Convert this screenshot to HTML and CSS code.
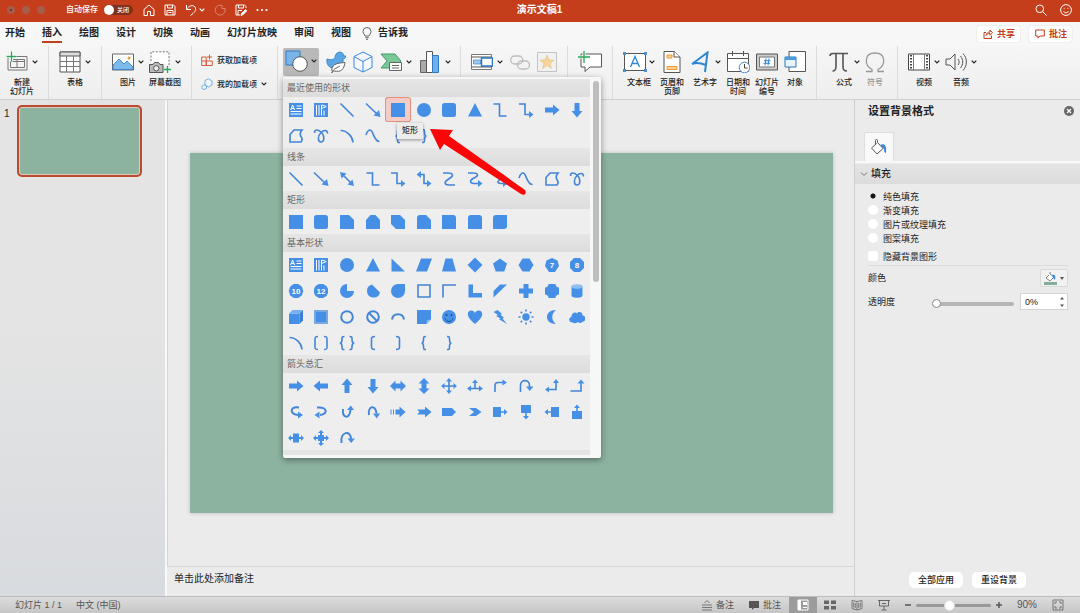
FILE: index.html
```html
<!DOCTYPE html>
<html lang="zh-CN">
<head>
<meta charset="utf-8">
<title>演示文稿1</title>
<link rel="stylesheet" href="styles.css">
</head>
<body>
<svg class="defs" aria-hidden="true">
  <symbol id="chev" viewBox="0 0 6 6"><path d="M.7 1.700L3 4l2.300-2.300" fill="none" stroke="currentColor" stroke-width="1.200"/></symbol>
  <symbol id="textbox" viewBox="0 0 16 16"><path d="M1 1h14v14H1z"/><g fill="none" stroke="#fff" stroke-width="1"><path d="M2.600 8l2-5 2 5M3.300 6.400h2.600M8.500 4h5M8.500 6.500h5M2.500 9.500h11M2.500 12h11"/></g></symbol>
  <symbol id="vtextbox" viewBox="0 0 16 16"><path d="M1 1h14v14H1z"/><g fill="none" stroke="#fff" stroke-width="1"><path d="M3.500 3v10.500M6 3v10.500M8.500 3v10.500M11 8.500v5M8.700 3l4.500 1.500-4.500 2"/></g></symbol>
  <symbol id="elbow" viewBox="0 0 16 16"><path d="M1.500 2h6v12h7" fill="none" stroke="currentColor" stroke-width="1.600"/></symbol>
  <symbol id="elbow-arrow" viewBox="0 0 16 16"><path d="M1 2h6v10.500h5" fill="none" stroke="currentColor" stroke-width="1.600"/><path d="M11 9l4.500 3.500L11 16z"/></symbol>
  <symbol id="line" viewBox="0 0 16 16"><path d="M1.500 1.500l13 13" fill="none" stroke="currentColor" stroke-width="1.600"/></symbol>
  <symbol id="line-arrow" viewBox="0 0 16 16"><path d="M1 1.500L12 12" fill="none" stroke="currentColor" stroke-width="1.600"/><path d="M15.500 15l-7-1.500 5.500-5.500z"/></symbol>
  <symbol id="freeform" viewBox="0 0 16 16"><path d="M2 14V6.500L6 2h8c-2.500 3-2 5.500-.5 7.500 1 1.600.6 3.300-.5 4.500z" fill="none" stroke="currentColor" stroke-width="1.600"/></symbol>
  <symbol id="scribble" viewBox="0 0 16 16"><path d="M1.500 5C1.500 1 5 1.500 8 4c4 3.500 3.500 10 0 10S4.500 8 8 4.500C10.500 2 14.500 1.500 14.500 5.500" fill="none" stroke="currentColor" stroke-width="1.600"/></symbol>
  <symbol id="arc" viewBox="0 0 16 16"><path d="M1.500 2.500C8 2.500 13.500 8 14 14.500" fill="none" stroke="currentColor" stroke-width="1.600"/></symbol>
  <symbol id="curve" viewBox="0 0 16 16"><path d="M1 7c1-3 2-5 4-5 3.500 0 3.500 11.500 9.500 11.500" fill="none" stroke="currentColor" stroke-width="1.600"/></symbol>
  <symbol id="square" viewBox="0 0 16 16"><path d="M1 1h14v14H1z"/></symbol>
  <symbol id="rounded" viewBox="0 0 16 16"><rect x="1" y="1" width="14" height="14" rx="2.500"/></symbol>
  <symbol id="circle" viewBox="0 0 16 16"><circle cx="8" cy="8" r="7"/></symbol>
  <symbol id="triangle" viewBox="0 0 16 16"><path d="M8 1l7 13.500H1z"/></symbol>
  <symbol id="right" viewBox="0 0 16 16"><path d="M1 5.500h8V2.500L15.500 8 9 13.500v-3H1z"/></symbol>
  <symbol id="lbrace" viewBox="0 0 16 16"><path d="M10 1.500c-2.500 0-2.500.5-2.500 3S7 8 5.500 8C7 8 7.500 9 7.500 11.500s0 3 2.500 3" fill="none" stroke="currentColor" stroke-width="1.600"/></symbol>
  <symbol id="rbrace" viewBox="0 0 16 16"><path d="M6 1.500c2.500 0 2.500.5 2.500 3S9 8 10.500 8C9 8 8.500 9 8.500 11.500s0 3-2.500 3" fill="none" stroke="currentColor" stroke-width="1.600"/></symbol>
</svg>

<header class="titlebar">
  <div class="lights"><i class="edited"></i><i></i><i></i></div>
  <label class="autosave">自动保存 <input type="checkbox" class="sr"><span class="toggle"><b></b>关闭</span></label>
  <nav class="quick">
    <button aria-label="主页"><svg viewBox="0 0 12 12"><path d="M1 5.500L6 1l5 4.500V11.500H7.500V7.500h-3v4H1z"/></svg></button>
    <button aria-label="保存"><svg viewBox="0 0 12 12"><path d="M1 1h8.500L11 2.500V11H1zM3.500 1v3h5V1M3 11V6.500h6V11M4.500 8.500h3"/></svg></button>
    <button aria-label="撤消" class="undo"><svg viewBox="0 0 12 12"><path d="M1.500 1v4.500H6M1.500 5.500C4 1.500 8 .5 10 3c2 3-1 6-4.500 8.500"/></svg><svg class="chev"><use href="#chev"/></svg></button>
    <button aria-label="恢复" class="dim"><svg viewBox="0 0 12 12"><path d="M8 1.500A5 5 0 1 0 11 5M8 1v3.500h3.500"/></svg></button>
    <button aria-label="另存为"><svg viewBox="0 0 12 12"><path d="M5 11H1V1h8.500L11 2.500V4M3.500 1v3h5V1M3 11V6.500h4"/><path d="M6 11.500l.5-2 4-4 1.300 1.300-4 4z" fill="#fff"/></svg></button>
    <button aria-label="更多"><svg viewBox="0 0 12 12" class="solid"><circle cx="1.500" cy="6" r="1.100"/><circle cx="6" cy="6" r="1.100"/><circle cx="10.500" cy="6" r="1.100"/></svg></button>
  </nav>
  <h1>演示文稿1</h1>
  <nav class="quick right-tools">
    <button aria-label="搜索"><svg viewBox="0 0 12 12"><circle cx="4.800" cy="4.800" r="3.800"/><path d="M7.600 7.600l4 4"/></svg></button>
    <button aria-label="反馈"><svg viewBox="0 0 12 12"><circle cx="6" cy="6" r="5.400"/><path d="M3.500 7.200c1 2 4 2 5 0M4.200 3.800v1M7.800 3.800v1"/></svg></button>
  </nav>
</header>

<nav class="tabs">
  <button>开始</button><button class="active">插入</button><button>绘图</button><button>设计</button><button>切换</button><button>动画</button><button>幻灯片放映</button><button>审阅</button><button>视图</button>
  <button class="tell"><svg viewBox="0 0 10 13"><path d="M3 9C3 7.500 1 6.800 1 4.500a4 4 0 0 1 8 0C9 6.800 7 7.500 7 9zM3.300 10.700h3.400M4 12.300h2" fill="none" stroke="#666"/></svg>告诉我</button>
  <span class="actions">
    <button><svg viewBox="0 0 10 10"><path d="M3 3.500H1v6h7.500V6.500M3 6.500C3.500 4 5 3 7 3V1l2.500 2.700L7 6.200V4.500C5 4.500 4 5 3 6.500z"/></svg>共享</button>
    <button><svg viewBox="0 0 10 10"><path d="M.7 1h8.600v6H5L3 9.200V7H.7z"/></svg>批注</button>
  </span>
</nav>

<section class="ribbon">
  <div class="group first">
    <button class="tool"><span><svg viewBox="0 0 22 22"><path d="M2 5.500h19V19H2zM4.500 8.500h14v8h-14zM11 8.500v8M4.500 10.500h14" fill="#f4f4f4" stroke="#777"/><path d="M5.500.5v10M.5 5.500h10" stroke="#fff" stroke-width="3"/><path d="M5.500.5v10M.5 5.500h10" stroke="#2aa85a" stroke-width="1.300"/></svg><svg class="chev"><use href="#chev"/></svg></span>新建<br>幻灯片</button>
  </div>
  <div class="group">
    <button class="tool"><span><svg viewBox="0 0 22 22"><path d="M1 1h20v20H1z" fill="#fff" stroke="#555"/><path d="M1 1h20v4H1z" fill="#ddd" stroke="#555"/><path d="M1 10.500h20M1 15.500h20M7.500 5v16M14.500 5v16" stroke="#777"/></svg><svg class="chev"><use href="#chev"/></svg></span>表格</button>
  </div>
  <div class="group">
    <button class="tool"><span><svg viewBox="0 0 22 22"><path d="M.5 3h21v16H.5z" fill="#fff" stroke="#666"/><path d="M1 14l6-6 5 5 3-3 6 6v2.500H1z" fill="#7db9ea" stroke="#2b7cc7" stroke-width=".8"/><circle cx="17" cy="7" r="1.500" fill="#ee9b3a"/></svg><svg class="chev"><use href="#chev"/></svg></span>图片</button>
    <button class="tool"><span><svg viewBox="0 0 22 22"><path d="M2 10V.8h18V14" fill="#fff" stroke="#777" stroke-dasharray="2 1.500"/><path d="M.5 13.500H4l1.500-2h4l1.500 2h3v8H.5z" fill="#bbb" stroke="#555"/><circle cx="7.300" cy="17.300" r="2.700" fill="#eee" stroke="#555"/><path d="M18.500 15v7M15 18.500h7" stroke="#2aa85a" stroke-width="1.300"/></svg><svg class="chev"><use href="#chev"/></svg></span>屏幕截图</button>
  </div>
  <div class="group addins">
    <button><svg viewBox="0 0 12 12"><path d="M.7 3h4.500v8.500H.7zM5.200 7h6.100v4.500H5.200zM.7 7h4.500M8.500.5v5M6 3h5.300" fill="none" stroke="#d8593b"/></svg>获取加载项</button>
    <button><svg viewBox="0 0 12 12"><path d="M4 2.500L7.500.8 11 3v4L7.500 9 4 7z" fill="#eef6fd" stroke="#5c9fd6" stroke-width=".8"/><path d="M1 8l2-1.300L5.500 8v2.500L3 11.500l-2-1z" fill="#eef6fd" stroke="#5c9fd6" stroke-width=".8"/></svg>我的加载项<svg class="chev"><use href="#chev"/></svg></button>
  </div>
  <div class="group illus">
    <div class="shapes-menu">
      <button class="tool pressed" aria-label="形状"><span><svg class="wide" viewBox="0 0 24 22"><path d="M1 1h14v14H1z" fill="#7ab5ea" stroke="#2f7cc4"/><circle cx="15" cy="14" r="7.300" fill="#fff" stroke="#555"/></svg><svg class="chev"><use href="#chev"/></svg></span></button>
      <div class="gallery">
        <div class="scroll">
          <h2>最近使用的形状</h2>
          <div class="grid">
            <button aria-label="文本框"><svg><use href="#textbox"/></svg></button>
            <button aria-label="竖排文本框"><svg><use href="#vtextbox"/></svg></button>
            <button aria-label="直线"><svg><use href="#line"/></svg></button>
            <button aria-label="箭头"><svg><use href="#line-arrow"/></svg></button>
            <button aria-label="矩形" class="picked"><svg><use href="#square"/></svg></button>
            <button aria-label="椭圆"><svg><use href="#circle"/></svg></button>
            <button aria-label="圆角矩形"><svg><use href="#rounded"/></svg></button>
            <button aria-label="三角形"><svg><use href="#triangle"/></svg></button>
            <button aria-label="肘形连接符"><svg><use href="#elbow"/></svg></button>
            <button aria-label="肘形箭头"><svg><use href="#elbow-arrow"/></svg></button>
            <button aria-label="右箭头"><svg><use href="#right"/></svg></button>
            <button aria-label="下箭头"><svg viewBox="0 0 16 16"><path d="M5.500 1v8H2.500L8 15.500 13.500 9h-3V1z"/></svg></button>
            <button aria-label="任意多边形"><svg><use href="#freeform"/></svg></button>
            <button aria-label="自由曲线"><svg><use href="#scribble"/></svg></button>
            <button aria-label="弧形"><svg><use href="#arc"/></svg></button>
            <button aria-label="曲线"><svg><use href="#curve"/></svg></button>
            <button aria-label="左大括号"><svg><use href="#lbrace"/></svg></button>
            <button aria-label="右大括号"><svg><use href="#rbrace"/></svg></button>
          </div>
          <h2>线条</h2>
          <div class="grid">
            <button aria-label="直线"><svg><use href="#line"/></svg></button>
            <button aria-label="箭头"><svg><use href="#line-arrow"/></svg></button>
            <button aria-label="双箭头"><svg viewBox="0 0 16 16"><path class="l" d="M4 4l8 8"/><path d="M15 15l-6.500-1.500 5-5zM1 1l6.500 1.500-5 5z"/></svg></button>
            <button aria-label="肘形"><svg><use href="#elbow"/></svg></button>
            <button aria-label="肘形箭头"><svg><use href="#elbow-arrow"/></svg></button>
            <button aria-label="肘形双箭头"><svg viewBox="0 0 16 16"><path class="l" d="M4 3.500h4v9h4"/><path d="M11 9l4.500 3.500L11 16zM5 0L.5 3.500 5 7z"/></svg></button>
            <button aria-label="曲线连接符"><svg viewBox="0 0 16 16"><path class="l" d="M2 2h5c5 0 6 3 2 5L7 8.500C3 11 3 14 8 14h6"/></svg></button>
            <button aria-label="曲线箭头"><svg viewBox="0 0 16 16"><path class="l" d="M1 2h5c5 0 6 2.500 2 4.500l-2 1C2 10 3 12.500 8 12.500h4"/><path d="M11 9l4.500 3.500L11 16z"/></svg></button>
            <button aria-label="曲线双箭头"><svg viewBox="0 0 16 16"><path class="l" d="M4 3.500h4c4 0 4 2 1 4C6 9 4 12.500 9 12.500h2"/><path d="M11 9l4.500 3.500L11 16zM5 0L.5 3.500 5 7z"/></svg></button>
            <button aria-label="曲线"><svg><use href="#curve"/></svg></button>
            <button aria-label="任意多边形"><svg><use href="#freeform"/></svg></button>
            <button aria-label="自由曲线"><svg><use href="#scribble"/></svg></button>
          </div>
          <h2>矩形</h2>
          <div class="grid">
            <button aria-label="矩形"><svg><use href="#square"/></svg></button>
            <button aria-label="圆角矩形"><svg><use href="#rounded"/></svg></button>
            <button aria-label="剪去单角"><svg viewBox="0 0 16 16"><path d="M1 1h9l5 5v9H1z"/></svg></button>
            <button aria-label="剪去同侧角"><svg viewBox="0 0 16 16"><path d="M5.500 1h5L15 6v9H1V6z"/></svg></button>
            <button aria-label="剪去对角"><svg viewBox="0 0 16 16"><path d="M1 1h9l5 5v9H6l-5-5z"/></svg></button>
            <button aria-label="圆角剪角"><svg viewBox="0 0 16 16"><path d="M4 1h6l5 5v9H1V4a3 3 0 0 1 3-3z"/></svg></button>
            <button aria-label="单圆角"><svg viewBox="0 0 16 16"><path d="M1 1h11a3 3 0 0 1 3 3v11H1z"/></svg></button>
            <button aria-label="同侧圆角"><svg viewBox="0 0 16 16"><path d="M4 1h8a3 3 0 0 1 3 3v11H1V4a3 3 0 0 1 3-3z"/></svg></button>
            <button aria-label="对角圆角"><svg viewBox="0 0 16 16"><path d="M4 1h11v11a3 3 0 0 1-3 3H1V4a3 3 0 0 1 3-3z"/></svg></button>
          </div>
          <h2>基本形状</h2>
          <div class="grid">
            <button aria-label="文本框"><svg><use href="#textbox"/></svg></button>
            <button aria-label="竖排文本框"><svg><use href="#vtextbox"/></svg></button>
            <button aria-label="椭圆"><svg><use href="#circle"/></svg></button>
            <button aria-label="三角形"><svg><use href="#triangle"/></svg></button>
            <button aria-label="直角三角形"><svg viewBox="0 0 16 16"><path d="M1.500 1.500L15 14.500H1.500z"/></svg></button>
            <button aria-label="平行四边形"><svg viewBox="0 0 16 16"><path d="M5 1.500h11l-5 13H0z"/></svg></button>
            <button aria-label="梯形"><svg viewBox="0 0 16 16"><path d="M4.500 1.500h7l3.500 13H1z"/></svg></button>
            <button aria-label="菱形"><svg viewBox="0 0 16 16"><path d="M8 .5L15.500 8 8 15.500.5 8z"/></svg></button>
            <button aria-label="五边形"><svg viewBox="0 0 16 16"><path d="M8 1.500l7 5-2.700 8H3.700L1 6.500z"/></svg></button>
            <button aria-label="六边形"><svg viewBox="0 0 16 16"><path d="M4.500 1.500h7L15.500 8l-4 6.500h-7L.5 8z"/></svg></button>
            <button aria-label="七边形"><svg viewBox="0 0 16 16"><path d="M8 1l5.500 2.500L15 9l-4 6H5L1 9l1.500-5.500z"/><text x="8" y="11">7</text></svg></button>
            <button aria-label="八边形"><svg viewBox="0 0 16 16"><path d="M5 1h6l4 4v6l-4 4H5l-4-4V5z"/><text x="8" y="11">8</text></svg></button>
            <button aria-label="十边形"><svg viewBox="0 0 16 16"><path d="M5.800 1h4.400l3.600 2.500L15.300 8l-1.500 4.500-3.600 2.500H5.800l-3.600-2.500L.7 8l1.500-4.500z"/><text x="8" y="11">10</text></svg></button>
            <button aria-label="十二边形"><svg viewBox="0 0 16 16"><path d="M6 1h4l3.500 2L15 6v4l-1.500 3-3.500 2H6l-3.500-2L1 10V6l1.500-3z"/><text x="8" y="11">12</text></svg></button>
            <button aria-label="饼形"><svg viewBox="0 0 16 16"><path d="M8 1a7 7 0 1 0 7 7H8z"/></svg></button>
            <button aria-label="弦形"><svg viewBox="0 0 16 16"><path d="M7 1.500A6.600 6.600 0 1 0 15 9.500z"/></svg></button>
            <button aria-label="泪滴形"><svg viewBox="0 0 16 16"><path d="M8 1h7v7a7 7 0 1 1-7-7z"/></svg></button>
            <button aria-label="图文框"><svg viewBox="0 0 16 16"><path class="l" d="M2 2h12v12H2z"/></svg></button>
            <button aria-label="半闭框"><svg viewBox="0 0 16 16"><path class="l" d="M2 14.500V2h13"/></svg></button>
            <button aria-label="L形"><svg viewBox="0 0 16 16"><path d="M1.500 1.500H6V10h9v4.500H1.500z"/></svg></button>
            <button aria-label="斜纹"><svg viewBox="0 0 16 16"><path d="M8 1.500h7L1.500 14.500V8z"/></svg></button>
            <button aria-label="十字形"><svg viewBox="0 0 16 16"><path d="M5.500 1h5v4.500H15v5h-4.500V15h-5v-4.500H1v-5h4.500z"/></svg></button>
            <button aria-label="缺角矩形"><svg viewBox="0 0 16 16"><path d="M4.500 1h7c0 2 1.500 3.500 3.500 3.500v7c-2 0-3.500 1.500-3.500 3.500h-7c0-2-1.500-3.500-3.500-3.500v-7c2 0 3.500-1.500 3.500-3.500z"/></svg></button>
            <button aria-label="圆柱形"><svg viewBox="0 0 16 16"><path d="M2.500 3.500v9c0 3 11 3 11 0v-9z"/><ellipse cx="8" cy="3.500" rx="5.500" ry="2.300" fill="#8fbdf0"/></svg></button>
            <button aria-label="立方体"><svg viewBox="0 0 16 16"><path d="M1 4.500h10.500V15H1z"/><path d="M1 4.500L4.500 1H15l-3.500 3.500z" fill="#77b0ee"/><path d="M15 1v10.500L11.500 15V4.500z" fill="#3a7fd0"/></svg></button>
            <button aria-label="棱台"><svg viewBox="0 0 16 16"><path d="M1 1h14v14H1z" fill="#77a8e2"/><path d="M3 3h10v10H3z"/></svg></button>
            <button aria-label="圆环"><svg viewBox="0 0 16 16"><circle cx="8" cy="8" r="5.800" class="l thick"/></svg></button>
            <button aria-label="禁止符"><svg viewBox="0 0 16 16"><circle cx="8" cy="8" r="5.800" class="l thick"/><path class="l thick" d="M4 4l8 8"/></svg></button>
            <button aria-label="空心弧"><svg viewBox="0 0 16 16"><path class="l thick" d="M2 10.500c1-7 11-7 12 0"/></svg></button>
            <button aria-label="折角形"><svg viewBox="0 0 16 16"><path d="M1 1h14v9.500L10.500 15H1z"/><path d="M15 10.500L10.500 15l.5-4z" fill="#8fbdf0"/></svg></button>
            <button aria-label="笑脸"><svg viewBox="0 0 16 16"><circle cx="8" cy="8" r="7"/><circle cx="5.500" cy="6" r="1" fill="#1c4f92"/><circle cx="10.500" cy="6" r="1" fill="#1c4f92"/><path d="M4 9.500c1.500 4 6.500 4 8 0" fill="none" stroke="#1c4f92"/></svg></button>
            <button aria-label="心形"><svg viewBox="0 0 16 16"><path d="M8 15C3 10.500.8 8 .8 5 .8 1 6 .3 8 4c2-3.700 7.200-3 7.200 1 0 3-2.200 5.500-7.200 10z"/></svg></button>
            <button aria-label="闪电形"><svg viewBox="0 0 16 16"><path d="M5.500 1l4.500 4-1.500.7 3.500 3-1.500.7L15 15l-8-4.700 1.500-.8L4 7l2-1-4.500-3z"/></svg></button>
            <button aria-label="太阳形"><svg viewBox="0 0 16 16"><circle cx="8" cy="8" r="3.700"/><path class="l" d="M8 .5v2M8 13.500v2M.5 8h2M13.500 8h2M2.700 2.700l1.400 1.400M11.900 11.900l1.400 1.400M13.300 2.700l-1.400 1.400M4.100 11.900l-1.400 1.400"/></svg></button>
            <button aria-label="新月形"><svg viewBox="0 0 16 16"><path d="M12 1C6 1 3 4 3 8s3 7 9 7c-5-3.500-5-10.500 0-14z"/></svg></button>
            <button aria-label="云形"><svg viewBox="0 0 16 16"><path d="M3.500 13.500C-.5 13.500-1 8.500 2.500 8 2 4 6.500 2.500 8 4.500c2-3 6-1 5.500 2 4 0 3.500 6 .5 6-2 2-4 1.500-5 .5-2 1.500-4 1.500-5.500.5z"/></svg></button>
            <button aria-label="弧形"><svg><use href="#arc"/></svg></button>
            <button aria-label="双括号"><svg viewBox="0 0 16 16"><path class="l" d="M5 1.500C2.500 1.500 2 2 2 4v8c0 2 .5 2.500 3 2.500M11 1.500c2.500 0 3 .5 3 2.500v8c0 2-.5 2.500-3 2.500"/></svg></button>
            <button aria-label="双大括号"><svg viewBox="0 0 16 16"><path class="l" d="M5.500 1.500C3 1.500 3 2 3 4.500S2.500 8 .7 8C2.500 8 3 9 3 11.500s0 3 2.500 3M10.500 1.500c2.500 0 2.500.5 2.500 3S13.500 8 15.300 8C13.500 8 13 9 13 11.500s0 3-2.500 3"/></svg></button>
            <button aria-label="左中括号"><svg viewBox="0 0 16 16"><path class="l" d="M10 1.500C7 1.500 6.500 2 6.500 4v8c0 2 .5 2.500 3.500 2.500"/></svg></button>
            <button aria-label="右中括号"><svg viewBox="0 0 16 16"><path class="l" d="M6 1.500c3 0 3.500.5 3.500 2.500v8c0 2-.5 2.500-3.500 2.500"/></svg></button>
            <button aria-label="左大括号"><svg><use href="#lbrace"/></svg></button>
            <button aria-label="右大括号"><svg><use href="#rbrace"/></svg></button>
          </div>
          <h2>箭头总汇</h2>
          <div class="grid">
            <button aria-label="右箭头"><svg><use href="#right"/></svg></button>
            <button aria-label="左箭头"><svg viewBox="0 0 16 16"><path d="M15 5.500H7v-3L.5 8 7 13.500v-3h8z"/></svg></button>
            <button aria-label="上箭头"><svg viewBox="0 0 16 16"><path d="M5.500 15V7H2.500L8 .5 13.500 7h-3v8z"/></svg></button>
            <button aria-label="下箭头"><svg viewBox="0 0 16 16"><path d="M5.500 1v8H2.500L8 15.500 13.500 9h-3V1z"/></svg></button>
            <button aria-label="左右箭头"><svg viewBox="0 0 16 16"><path d="M0 8l5.500-5.500v3h5v-3L16 8l-5.500 5.500v-3h-5v3z"/></svg></button>
            <button aria-label="上下箭头"><svg viewBox="0 0 16 16"><path d="M8 0l5.500 5.500h-3v5h3L8 16l-5.500-5.500h3v-5h-3z"/></svg></button>
            <button aria-label="十字箭头"><svg viewBox="0 0 16 16"><path class="l" d="M8 3v10M3 8h10"/><path d="M8 0l3 3.500H5zM8 16l3-3.500H5zM0 8l3.500-3v6zM16 8l-3.500-3v6z"/></svg></button>
            <button aria-label="丁字箭头"><svg viewBox="0 0 16 16"><path class="l" d="M8 4v6.500M3 10.500h10"/><path d="M8 1.500L11 5H5zM0 10.500l4-3v6zM16 10.500l-4-3v6z"/></svg></button>
            <button aria-label="圆角右箭头"><svg viewBox="0 0 16 16"><path class="l" d="M3 14V7.500C3 5.500 4 4.500 6 4.500h5"/><path d="M10.500 1.500l4.500 3-4.500 3z"/></svg></button>
            <button aria-label="手杖形箭头"><svg viewBox="0 0 16 16"><path class="l" d="M2.500 14V7.500c0-6.500 9-6.500 9 0v2"/><path d="M8 8.500h7.500L11.700 13z"/></svg></button>
            <button aria-label="直角双向箭头"><svg viewBox="0 0 16 16"><path class="l" d="M5 11.500h7V5"/><path d="M12 1l3 4H9zM1 11.500l4-3v6z"/></svg></button>
            <button aria-label="直角上箭头"><svg viewBox="0 0 16 16"><path class="l" d="M1.500 13h10.500V5"/><path d="M12 1.500l3.500 4h-7z"/></svg></button>
            <button aria-label="左弧形箭头"><svg viewBox="0 0 16 16"><path class="l thick" d="M11 3.500C2 2.500 1 9.500 10 11"/><path d="M10 7.500l5 3.500-5 3.500z"/></svg></button>
            <button aria-label="右弧形箭头"><svg viewBox="0 0 16 16"><path class="l thick" d="M4 3.500c10-1 12 6.500 3 7.500"/><path d="M6.500 7.500L1.500 11l5 3.500z"/></svg></button>
            <button aria-label="上弧形箭头"><svg viewBox="0 0 16 16"><path class="l thick" d="M4 5c-1 9 6.500 11 7.500 1"/><path d="M8 6l3.800-4.500L15 6z"/></svg></button>
            <button aria-label="下弧形箭头"><svg viewBox="0 0 16 16"><path class="l thick" d="M4 11C2.500 2 10.500 0 11.500 9.500"/><path d="M8 9.500l3.800 5L15 9.500z"/></svg></button>
            <button aria-label="虚尾箭头"><svg viewBox="0 0 16 16"><path d="M5.500 5.500H9.500V2.500L15.500 8l-6 5.500v-3h-4zM.5 5.500h1v5h-1zM3 5.500h1v5H3z"/></svg></button>
            <button aria-label="燕尾形箭头"><svg viewBox="0 0 16 16"><path d="M1 5.500h8v-3L15.500 8 9 13.500v-3H1L3.500 8z"/></svg></button>
            <button aria-label="五边形箭头"><svg viewBox="0 0 16 16"><path d="M1 4h10l4 4-4 4H1z"/></svg></button>
            <button aria-label="V形"><svg viewBox="0 0 16 16"><path d="M2 4h7l5.500 4L9 12H2l5-4z"/></svg></button>
            <button aria-label="右箭头标注"><svg viewBox="0 0 16 16"><path d="M1 3h8v4.200h3V5l3.500 3-3.500 3V8.800H9V13H1z"/></svg></button>
            <button aria-label="下箭头标注"><svg viewBox="0 0 16 16"><path d="M3 1h10v8H8.800v3H11l-3 3.500L5 12h2.200V9H3z"/></svg></button>
            <button aria-label="左箭头标注"><svg viewBox="0 0 16 16"><path d="M15 3H7v4.200H4V5L.5 8 4 11V8.800h3V13h8z"/></svg></button>
            <button aria-label="上箭头标注"><svg viewBox="0 0 16 16"><path d="M3 15h10V7H8.800V4H11L8 .5 5 4h2.200v3H3z"/></svg></button>
            <button aria-label="左右箭头标注"><svg viewBox="0 0 16 16"><path d="M5 3.500h6V7h2V5l3 3-3 3V9h-2v3.500H5V9H3v2L0 8l3-3v2h2z"/></svg></button>
            <button aria-label="十字箭头标注"><svg viewBox="0 0 16 16"><path d="M5 5h2V3H5l3-3 3 3H9v2h2v2h2V5l3 3-3 3V9h-2v2H9v2h2l-3 3-3-3h2v-2H5V9H3v2L0 8l3-3v2h2z"/></svg></button>
            <button aria-label="环形箭头"><svg viewBox="0 0 16 16"><path class="l thick" d="M2.500 13C1 1 12 0 12 9"/><path d="M8.500 8.500H16L12.200 13z"/></svg></button>
          </div>
          <div class="next-band"></div>
        </div>
        <div class="track"><div class="thumb"></div></div>
        <div class="tooltip" role="tooltip">矩形</div>
        <svg class="pointer" viewBox="0 0 98 68"><path d="M1 0l23 1-4 6 76 54q2 3-1 5l-3-1-77-50-4 6z" fill="#fb0606"/></svg>
      </div>
    </div>
    <button class="tool" aria-label="图标"><span><svg class="narrow" viewBox="0 0 20 22"><path d="M1 8c3 1 6 1 8-1 0-7 8-8 9-2h2c0 2-2 3-3 3 1 7-5 10-9 9.500C3 17 0 13 1 8z" fill="#5ba6e2" stroke="#2b7cc7" stroke-width=".8"/><path d="M6 20c-1-6 4-8 13-8.500-1 7-4 10-11 8.500-1 0-2 1-2 2 0-3 4-5 8-7" fill="#fff" stroke="#666"/></svg></span></button>
    <button class="tool" aria-label="3D 模型"><span><svg class="narrow" viewBox="0 0 20 22"><path d="M10 1l9 4.500v11L10 21l-9-4.500v-11zM1 5.500l9 5 9-5M10 10.500V21" fill="#f2f8fe" stroke="#3b86dc"/></svg></span></button>
    <button class="tool" aria-label="SmartArt"><span><svg viewBox="0 0 22 22"><path d="M1 3h14l6 7-6 7H1l6-7z" fill="#7cc798" stroke="#3f9c66"/><path d="M9.500 11.500h12v8h-12zM12 14.500h7M12 17h7" fill="#fff" stroke="#666"/></svg><svg class="chev"><use href="#chev"/></svg></span></button>
    <button class="tool" aria-label="图表"><span><svg viewBox="0 0 22 22"><path d="M1.500 9.500h6v12h-6z" fill="#aaa" stroke="#666"/><path d="M7.500.5h6v21h-6z" fill="#fff" stroke="#555"/><path d="M13.500 4.500h6v17h-6z" fill="#6eb1ea" stroke="#2f7cc4"/></svg><svg class="chev"><use href="#chev"/></svg></span></button>
  </div>
  <div class="group links">
    <button class="tool" aria-label="缩放定位"><span><svg viewBox="0 0 22 22"><path d="M.5 3.500h20v15H.5z" fill="#fff" stroke="#777"/><path d="M1 6h19M1 16h19" stroke="#aaa" stroke-width="2"/><path d="M2.500 9h7v4h-7z" fill="#9ccaf0" stroke="#3a84c8" stroke-width=".7"/><path d="M10.500 7h11v8h-11z" fill="#fff" stroke="#2676bd" stroke-width="1.500"/></svg><svg class="chev"><use href="#chev"/></svg></span></button>
    <button class="tool" aria-label="链接"><span><svg class="narrow faded" viewBox="0 0 20 22"><rect x=".7" y="5" width="12" height="8" rx="4" fill="none" stroke="#999" stroke-width="1.300"/><rect x="7.500" y="10" width="12" height="8" rx="4" fill="none" stroke="#999" stroke-width="1.300"/></svg></span></button>
    <button class="tool" aria-label="动作"><span><svg class="narrow" viewBox="0 0 20 22"><path d="M.5 1.500h19v19H.5z" fill="#f1f1f1" stroke="#c4c4c4"/><path d="M10 4l2 5 5 .2-4 3.200 1.500 5-4.500-3-4.500 3 1.500-5-4-3.200L8 9z" fill="#f6d59c" stroke="#e8bd78" stroke-width=".6"/></svg></span></button>
  </div>
  <div class="group">
    <button class="tool" aria-label="批注"><span><svg class="wide" viewBox="0 0 24 22"><path d="M3 3h20.500v13H12l-5 4.500V16H3z" fill="#fff" stroke="#555"/><path d="M6 0v12M0 6h12" stroke="#f3f3f3" stroke-width="3"/><path d="M6 0v12M0 6h12" stroke="#2aa85a" stroke-width="1.300"/></svg></span></button>
  </div>
  <div class="group text">
    <button class="tool"><span><svg class="wide" viewBox="0 0 24 22"><path d="M1.500 2.500h21v17h-21z" fill="#fff" stroke="#555"/><path d="M7.500 16L12 5.500l4.500 10.500M9 12.500h6" fill="none" stroke="#2f86d2" stroke-width="1.300"/><path d="M0 1h3v3H0zM21 1h3v3h-3zM0 18h3v3H0zM21 18h3v3h-3z" fill="#4a90d0"/></svg><svg class="chev"><use href="#chev"/></svg></span>文本框</button>
    <button class="tool"><span><svg class="narrow" viewBox="0 0 20 22"><path d="M2 .5h10L18 6v15.500H2z" fill="#fff" stroke="#555"/><path d="M12 .5V6h6" fill="#fff" stroke="#555"/><path d="M5 4h5v3H5zM5 15.500h10v3H5z" fill="#fbd09a" stroke="#ef9a35"/></svg></span>页眉和<br>页脚</button>
    <button class="tool"><span><svg viewBox="0 0 22 22"><path d="M3 13L18.500 1.500 16 21M3 13c4-2 9-1 14 1" fill="none" stroke="#2f86d2" stroke-width="2"/></svg><svg class="chev"><use href="#chev"/></svg></span>艺术字</button>
    <button class="tool"><span><svg class="wide" viewBox="0 0 24 22"><path d="M1.500 2.500h21v18h-21z" fill="#fff" stroke="#555"/><path d="M1.500 7.500h21M6.500 0v5M17.500 0v5" stroke="#555"/><circle cx="18.500" cy="16.500" r="5.300" fill="#fff" stroke="#3a8ad0"/><path d="M18.500 13v4h3" fill="none" stroke="#444"/></svg></span>日期和<br>时间</button>
    <button class="tool"><span><svg viewBox="0 0 22 22"><path d="M.5 3h21v16H.5z" fill="#ccc" stroke="#555"/><path d="M3.500 6h15v10h-15z" fill="#fff" stroke="#777"/><path d="M10 7.500L9 14.500M13 7.500l-1 7M8 9.700h6.500M7.500 12.300H14" stroke="#2f86d2"/></svg></span>幻灯片<br>编号</button>
    <button class="tool"><span><svg viewBox="0 0 22 22"><path d="M5 .5h16.500v20H5z" fill="#fff" stroke="#555"/><path d="M1 6h11v10H1z" fill="#e7f3fd" stroke="#2676bd"/><path d="M1 6h11v3H1z" fill="#4a9be0"/></svg></span>对象</button>
  </div>
  <div class="group formula">
    <button class="tool"><span><svg viewBox="0 0 22 22"><path d="M2 5c0-2 1-2.500 3-2.500h15M8 3v12c0 4-1 5-3.500 5M15 3v13c0 3 1 4 4 4" fill="none" stroke="#555" stroke-width="1.600"/></svg><svg class="chev"><use href="#chev"/></svg></span>公式</button>
    <button class="tool off"><span><svg class="narrow" viewBox="0 0 20 22"><path d="M1 20.500h6v-2C-1 14-1 2 10 2s11 12 3 16.500v2h6" fill="none" stroke="#999" stroke-width="1.300"/></svg></span>符号</button>
  </div>
  <div class="group last">
    <button class="tool"><span><svg viewBox="0 0 22 22"><path d="M.5 3h21v16H.5z" fill="#fff" stroke="#444"/><path d="M3 4v14M19 4v14" stroke="#444" stroke-width="2" stroke-dasharray="1.500 1.500"/><path d="M5.500 3v16M16.500 3v16" stroke="#777"/></svg><svg class="chev"><use href="#chev"/></svg></span>视频</button>
    <button class="tool"><span><svg viewBox="0 0 22 22"><path d="M1 8h4l5-5v16l-5-5H1zM13 8c1.500 2 1.500 4 0 6M15.500 5c3 4 3 8 0 12M18 2.500c4.500 5 4.500 12 0 17" fill="none" stroke="#555"/></svg><svg class="chev"><use href="#chev"/></svg></span>音频</button>
  </div>
</section>

<main class="work">
  <aside class="thumbs"><span>1</span><button class="mini" aria-label="幻灯片 1"></button></aside>
  <section class="stage">
    <div class="canvas"><div class="slide"></div></div>
    <div class="notes">单击此处添加备注</div>
  </section>
  <aside class="pane">
    <header><h2>设置背景格式</h2><button class="close" aria-label="关闭"><svg viewBox="0 0 10 10"><circle cx="5" cy="5" r="5" fill="#666"/><path d="M3 3l4 4M7 3L3 7" stroke="#fff" stroke-width="1.300"/></svg></button></header>
    <div class="pane-tabs"><button aria-label="填充"><svg viewBox="0 0 18 16"><path d="M6.500 4.500L1.500 9 7 15l6-5.500-5.500-6V1.500c0-1.500-2-1.500-2 0v4" fill="#fff" stroke="#555"/><path d="M10 6c4-2 7 0 6 8-1 0-2-1-2-4l-1-1z" fill="#3a8ad6"/></svg></button></div>
    <h3><svg viewBox="0 0 8 6"><path d="M1 1.500l3 3 3-3" fill="none" stroke="#777"/></svg>填充</h3>
    <form class="form">
      <label><input type="radio" name="fill" checked>纯色填充</label>
      <label><input type="radio" name="fill">渐变填充</label>
      <label><input type="radio" name="fill">图片或纹理填充</label>
      <label><input type="radio" name="fill">图案填充</label>
      <label class="hide"><input type="checkbox">隐藏背景图形</label>
      <div class="row color"><span>颜色</span><button type="button" class="swatch" aria-label="颜色"><svg viewBox="0 0 22 14"><path d="M6 4L3 7l4 3 4-4-4-3V1" fill="#fff" stroke="#666" stroke-width=".8"/><path d="M9 4c3-1 4 1 3 5l-2-2z" fill="#3a8ad6"/><path d="M1 11h13v3H1z" fill="#86ad9b"/><path d="M17 6h4l-2 3z" fill="#555"/></svg></button></div>
      <div class="row"><label for="alpha">透明度</label><input id="alpha" type="range" value="0"><span class="spin"><input type="text" value="0%" aria-label="透明度百分比"><svg viewBox="0 0 6 14"><path d="M1 4.500L3 2l2 2.500zM1 9.500L3 12l2-2.500z" fill="#555"/></svg></span></div>
    </form>
    <footer><button>全部应用</button><button>重设背景</button></footer>
  </aside>
</main>

<footer class="status">
  <span>幻灯片 1 / 1</span><span>中文 (中国)</span>
  <div class="views">
    <button><svg viewBox="0 0 12 12"><path d="M1 6h10M1 8.500h10M1 11h10M3.500 4L6 1.500 8.500 4" fill="none" stroke="#777"/></svg>备注</button>
    <button><svg viewBox="0 0 12 12"><path d="M1 2h10v7H6l-2 2V9H1z" fill="#555"/></svg>批注</button>
    <button class="on" aria-label="普通视图"><svg viewBox="0 0 12 12"><path d="M1 1h10v10H1z" fill="none" stroke="#fff"/><path d="M1 1h3v10H1zM6 3h4v3H6zM6 8h4v1H6z" fill="#fff"/></svg></button>
    <button aria-label="幻灯片浏览"><svg viewBox="0 0 12 12"><path d="M0 1.500h5v3.500H0zM7 1.500h5v3.500H7zM0 7h5v3.500H0zM7 7h5v3.500H7z" fill="#666"/></svg></button>
    <button aria-label="阅读视图"><svg viewBox="0 0 12 12"><path d="M6 2.500L1 1.500v8l5 1.500 5-1.500v-8zV11M2.700 3.500v5M4.300 4v5M7.700 4v5M9.300 3.500v5" fill="none" stroke="#777"/></svg></button>
    <button aria-label="幻灯片放映"><svg viewBox="0 0 12 12"><path d="M0 1.500h12M1.500 1.500V7h9V1.500M6 7v4M3.500 11h5M4 4.500h4" fill="none" stroke="#666"/></svg></button>
  </div>
  <div class="zoom"><button aria-label="缩小"><svg viewBox="0 0 8 8"><path d="M1 4h6" stroke="#555" stroke-width="1.500"/></svg></button><input type="range" value="44" aria-label="缩放"><button aria-label="放大"><svg viewBox="0 0 8 8"><path d="M1 4h6M4 1v6" stroke="#555" stroke-width="1.500"/></svg></button><output>90%</output><button class="fit" aria-label="适应窗口"><svg viewBox="0 0 12 12"><path d="M1 1h10v10H1z" fill="none" stroke="#777"/><path d="M3 5V3h2M7 3h2v2M9 7v2H7M5 9H3V7" fill="none" stroke="#777"/></svg></button></div>
</footer>
</body>
</html>
```
FILE: styles.css
```css
* { box-sizing: border-box; }
body {
  margin: 0;
  height: 100vh;
  display: flex;
  flex-direction: column;
  overflow: hidden;
  font: 9px/12px "Liberation Sans", "Noto Sans CJK SC", sans-serif;
  color: #222;
  background: #ebebeb;
}
button {
  margin: 0;
  padding: 0;
  border: 0;
  background: none;
  font: inherit;
  color: inherit;
}
svg { display: block; flex: none; }
h1, h2, h3 { margin: 0; font-size: inherit; }
.defs { position: absolute; width: 0; height: 0; }
.sr { position: absolute; opacity: 0; }
.chev { width: 6px; height: 6px; }

/* title bar */
.titlebar {
  height: 22px;
  flex: none;
  display: grid;
  grid-template-columns: 55px 79px 1fr auto 1fr 134px;
  align-items: center;
  padding: 0 8px 2px 7px;
  background: #c43e1c;
  color: #fff;
}
.lights { display: flex; gap: 7px; }
.lights i {
  width: 8px;
  height: 8px;
  border-radius: 50%;
  background: #a65e4c;
}
.lights .edited { border: 3px solid #a65e4c; background: #5d2b20; }
.autosave {
  display: flex;
  align-items: center;
  gap: 6px;
  padding-left: 4px;
  font-size: 8px;
  font-weight: 500;
  white-space: nowrap;
}
.toggle {
  display: flex;
  align-items: center;
  gap: 3px;
  width: 29px;
  height: 10px;
  border-radius: 5px;
  background: #80301c;
  font-size: 6px;
}
.toggle b { width: 10px; height: 10px; border-radius: 50%; background: #fff; }
.quick { display: flex; gap: 9px; padding-left: 2px; }
.quick button { display: flex; align-items: center; }
.quick svg { width: 12px; height: 12px; fill: none; stroke: #fff; }
.quick .solid { fill: #fff; stroke: none; }
.quick .undo { gap: 2px; }
.quick .chev { width: 6px; height: 6px; stroke: none; }
.quick .dim { opacity: .35; }
.titlebar h1 { font-size: 10px; font-weight: 700; }
.right-tools { grid-column: 6; justify-content: flex-end; gap: 13px; }

/* tabs */
.tabs {
  height: 24px;
  flex: none;
  display: flex;
  align-items: stretch;
  gap: 17px;
  padding: 0 8px 0 5px;
  background: #f7f7f7;
  font-size: 10px;
  font-weight: 700;
}
.tabs > button { padding-top: 3px; border-bottom: 2px solid transparent; margin-bottom: 3px; }
.tabs > .active { border-color: #c43e1c; }
.tabs > .tell { display: flex; align-items: center; gap: 6px; margin-left: -6px; }
.tell svg { width: 10px; height: 13px; }
.actions { display: flex; gap: 9px; margin-left: auto; align-items: center; }
.actions button {
  display: flex;
  align-items: center;
  gap: 4px;
  height: 16px;
  padding: 0 5px 0 6px;
  border-radius: 2px;
  background: #fff;
  box-shadow: 0 0 1px #bbb;
  color: #c43e1c;
  font-size: 9px;
}
.actions svg { width: 10px; height: 10px; fill: none; stroke: #c43e1c; }

/* ribbon */
.ribbon {
  height: 54px;
  flex: none;
  display: flex;
  background: linear-gradient(#f6f6f6, #eeeeee);
  border-bottom: 1px solid #d0d0d0;
  font-size: 8px;
  line-height: 9px;
  font-weight: 500;
}
.group {
  display: flex;
  gap: 5px;
  padding: 2px 10px 0;
  border-right: 1px solid #dcdcdc;
}
.first { padding-left: 6px; }
.last { border-right: 0; }
.illus { gap: 7px; padding: 2px 9px 0 5px; }
.links { gap: 7px; }
.formula { padding: 2px 12px 0 11px; }
.tool {
  display: flex;
  flex-direction: column;
  align-items: center;
  justify-content: flex-start;
  white-space: nowrap;
  min-width: 20px;
}
.tool span {
  display: flex;
  align-items: center;
  gap: 4px;
  height: 28px;
  margin-bottom: 2px;
}
.tool span svg { width: 22px; height: 22px; }
.tool span .wide { width: 24px; }
.tool span .narrow { width: 20px; }
.tool span .chev { width: 6px; height: 6px; }
.tool .wide + .chev { margin-left: -2px; }
.off { color: #999; }
.faded { opacity: .6; }
.addins { flex-direction: column; gap: 10px; padding: 7px 10px 0 9px; }
.addins button { display: flex; align-items: center; gap: 4px; height: 14px; }
.addins button > svg:first-child { width: 12px; height: 12px; }
.shapes-menu { position: relative; }
.pressed { width: 36px; height: 28px; background: #b9b9b9; border-radius: 2px; }

/* shape gallery */
.gallery {
  position: absolute;
  z-index: 5;
  top: 29px;
  left: 0;
  width: 318px;
  display: flex;
  padding: 2px 0 3px;
  border-radius: 2px;
  background: #f7f7f7;
  box-shadow: 0 2px 6px rgba(0, 0, 0, .4);
  color: #4385d8;
}
.scroll { width: 307px; background: #eeeeee; }
.scroll h2 {
  height: 18px;
  padding: 0 4px;
  line-height: 18px;
  font-size: 9px;
  font-weight: 400;
  color: #666;
  background: linear-gradient(#e6e6e6, #dcdcdc);
}
.grid {
  display: grid;
  grid-template-columns: repeat(12, 1fr);
  grid-auto-rows: 25px;
  row-gap: 1px;
}
.grid button {
  display: flex;
  align-items: center;
  justify-content: center;
  border-radius: 3px;
}
.grid svg { width: 16px; height: 16px; fill: #4590e6; }
.grid .picked { background: #f3cdc5; box-shadow: inset 0 0 0 1px #e79080; }
.grid text {
  fill: #fff;
  font: bold 8px "Liberation Sans", sans-serif;
  text-anchor: middle;
}
.grid .l { fill: none; stroke: #4385d8; stroke-width: 1.6; }
.grid .thick { stroke-width: 2; }
.next-band { height: 5px; background: #e4e4e4; }
.track { flex: 1; padding: 2px 2px 0 3px; }
.thumb { width: 6px; height: 201px; border-radius: 3px; background: #bdbdbd; }
.tooltip {
  position: absolute;
  left: 114px;
  top: 46px;
  padding: 3px 5px;
  background: #ececec;
  box-shadow: 0 1px 3px rgba(0, 0, 0, .4);
  color: #333;
  line-height: 10px;
}
.pointer { position: absolute; left: 146px; top: 52px; width: 98px; height: 68px; }

/* work area */
.work { flex: 1; min-height: 0; display: flex; }
.thumbs {
  width: 165px;
  flex: none;
  display: flex;
  align-items: flex-start;
  gap: 8px;
  padding: 5px 0 0 4px;
  background: linear-gradient(#e4e4e4 45%, #d8dbdf);
}
.thumbs span { width: 5px; padding-top: 3px; font-size: 10px; }
.mini {
  width: 125px;
  height: 72px;
  border: 2px solid #bb4a2e;
  border-radius: 5px;
  background: #8cb2a0;
  box-shadow: inset 0 0 0 1px #d9c9bd;
}
.stage {
  flex: 1;
  min-width: 0;
  display: flex;
  flex-direction: column;
  border-left: 2px solid #f8f8f8;
}
.canvas {
  flex: 1;
  display: flex;
  align-items: center;
  padding: 0 21px 0 22px;
  border-left: 1px solid #d5d5d5;
}
.slide {
  width: 100%;
  aspect-ratio: 644 / 361;
  background: #8cb2a0;
  box-shadow: 0 0 4px rgba(0, 0, 0, .2);
}
.notes {
  height: 30px;
  padding: 6px 7px;
  border-top: 1px solid #d6d6d6;
  font-size: 10px;
}

/* format pane */
.pane {
  width: 226px;
  flex: none;
  display: flex;
  flex-direction: column;
  border-left: 1px solid #cfcfcf;
}
.pane header {
  display: flex;
  justify-content: space-between;
  align-items: center;
  height: 22px;
  padding: 0 6px 0 13px;
}
.pane header h2 { font-size: 11px; font-weight: 700; }
.close svg { width: 10px; height: 10px; }
.pane-tabs {
  display: flex;
  height: 41px;
  align-items: flex-end;
  padding-left: 9px;
  border-bottom: 2px solid #f9f9f9;
}
.pane-tabs button {
  width: 30px;
  height: 29px;
  display: flex;
  align-items: center;
  justify-content: center;
  border: 1px solid #ddd;
  border-bottom: 0;
  border-radius: 2px 2px 0 0;
  background: #f9f9f9;
}
.pane-tabs svg { width: 18px; height: 16px; }
.pane h3 {
  display: flex;
  align-items: center;
  gap: 3px;
  height: 20px;
  margin-top: 1px;
  padding-left: 5px;
  background: linear-gradient(#e4e4e4, #dcdcdc);
  font-size: 10px;
  font-weight: 500;
}
.pane h3 svg { width: 8px; height: 6px; }
.form { padding: 6px 12px 0 13px; }
.form > label {
  display: flex;
  align-items: center;
  gap: 5px;
  line-height: 14px;
}
.form > .hide { margin-top: 4px; padding-bottom: 1px; }
.form input[type="radio"], .form input[type="checkbox"] {
  appearance: none;
  width: 10px;
  height: 10px;
  margin: 0 0 2px;
  background: #fff;
  border-radius: 50%;
}
.form input[type="checkbox"] { border-radius: 2px; }
.form input[type="radio"]:checked {
  background: radial-gradient(#111 2px, #ebebeb 3px);
}
.row { display: flex; align-items: center; height: 23px; }
.row.color { justify-content: space-between; border-top: 1px solid #dcdcdc; height: 25px; }
.swatch {
  padding: 1px 2px;
  border: 1px solid #d9d9d9;
  border-radius: 2px;
  background: #f2f2f2;
}
.swatch svg { width: 22px; height: 14px; }
input[type="range"] { appearance: none; margin: 0; background: none; }
input[type="range"]::-webkit-slider-runnable-track {
  height: 4px;
  border-radius: 2px;
  background: #b5b5b5;
}
input[type="range"]::-webkit-slider-thumb {
  appearance: none;
  width: 9px;
  height: 9px;
  margin-top: -3px;
  border: 1px solid #8a8a8a;
  border-radius: 50%;
  background: #fff;
}
#alpha { flex: 1; min-width: 0; height: 9px; margin: 5px 6px 0 37px; }
.spin {
  display: flex;
  align-items: center;
  width: 48px;
  height: 17px;
  padding: 0 2px 0 4px;
  background: #fff;
  border: 1px solid #d5d5d5;
}
.spin input {
  flex: 1;
  min-width: 0;
  padding: 0;
  border: 0;
  font: inherit;
  color: inherit;
}
.spin svg { width: 6px; height: 14px; }
.pane footer {
  display: flex;
  justify-content: center;
  gap: 9px;
  margin-top: auto;
  padding: 0 0 8px;
}
.pane footer button {
  height: 16px;
  padding: 0 9px;
  border-radius: 5px;
  background: #fff;
  font-weight: 500;
}

/* status bar */
.status {
  height: 17px;
  flex: none;
  display: flex;
  align-items: center;
  gap: 14px;
  padding: 0 16px 0 15px;
  border-top: 1px solid #bdbdbd;
  background: linear-gradient(#dcdcdc, #c6c6c6);
  color: #555;
}
.views { display: flex; align-self: stretch; margin-left: auto; }
.views button { display: flex; align-items: center; justify-content: center; gap: 3px; width: 27px; }
.views button:nth-child(-n+2) { width: auto; padding-right: 14px; }
.views button:nth-child(2) { padding-right: 8px; }
.views .on { background: #9c9c9c; width: 28px; }
.views svg { width: 12px; height: 12px; }
.zoom { display: flex; align-items: center; margin-left: -8px; }
.zoom svg { width: 8px; height: 8px; }
.zoom input { width: 75px; height: 11px; margin: 0 4px; }
.zoom input::-webkit-slider-runnable-track { height: 3px; background: #999; }
.zoom input::-webkit-slider-thumb { width: 11px; height: 11px; margin-top: -4px; border-color: #ddd; }
.zoom output { margin: 0 15px 0 14px; font-size: 10px; }
.zoom .fit svg { width: 12px; height: 12px; }
```
